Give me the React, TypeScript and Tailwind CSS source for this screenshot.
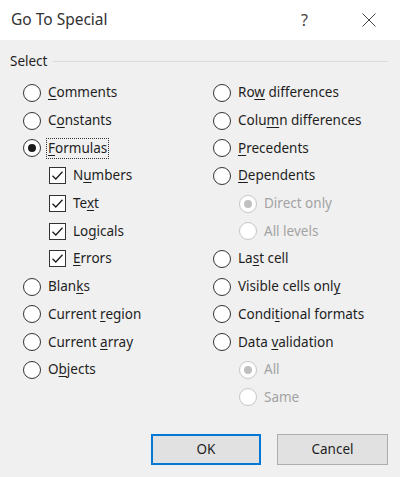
import React from "react";

type Item = {
  label: React.ReactNode;
  kind: "radio" | "check";
  checked?: boolean;
  disabled?: boolean;
  indent?: boolean;
  focus?: boolean;
};

// label with an access-key letter underlined
const k = (before: string, key: string, after: string) => (
  <>
    {before}
    <span className="underline decoration-1 underline-offset-[2px]">{key}</span>
    {after}
  </>
);

const leftItems: Item[] = [
  { label: k("", "C", "omments"), kind: "radio" },
  { label: k("C", "o", "nstants"), kind: "radio" },
  { label: k("", "F", "ormulas"), kind: "radio", checked: true, focus: true },
  { label: k("N", "u", "mbers"), kind: "check", checked: true, indent: true },
  { label: k("Te", "x", "t"), kind: "check", checked: true, indent: true },
  { label: k("Lo", "g", "icals"), kind: "check", checked: true, indent: true },
  { label: k("", "E", "rrors"), kind: "check", checked: true, indent: true },
  { label: k("Blan", "k", "s"), kind: "radio" },
  { label: k("Current ", "r", "egion"), kind: "radio" },
  { label: k("Current ", "a", "rray"), kind: "radio" },
  { label: k("O", "b", "jects"), kind: "radio" },
];

const rightItems: Item[] = [
  { label: k("Ro", "w", " differences"), kind: "radio" },
  { label: k("Colu", "m", "n differences"), kind: "radio" },
  { label: k("", "P", "recedents"), kind: "radio" },
  { label: k("", "D", "ependents"), kind: "radio" },
  { label: "Direct only", kind: "radio", checked: true, disabled: true, indent: true },
  { label: "All levels", kind: "radio", disabled: true, indent: true },
  { label: k("La", "s", "t cell"), kind: "radio" },
  { label: k("Visible cells onl", "y", ""), kind: "radio" },
  { label: k("Condi", "t", "ional formats"), kind: "radio" },
  { label: k("Data ", "v", "alidation"), kind: "radio" },
  { label: "All", kind: "radio", checked: true, disabled: true, indent: true },
  { label: "Same", kind: "radio", disabled: true, indent: true },
];

function Radio({ checked, disabled }: { checked?: boolean; disabled?: boolean }) {
  return (
    <span
      className={`flex h-[18px] w-[18px] shrink-0 items-center justify-center rounded-full border bg-white ${
        disabled ? "border-[#c6c6c6]" : "border-[#333333]"
      }`}
    >
      {checked && (
        <span
          className={`h-[8px] w-[8px] rounded-full ${disabled ? "bg-[#c0c0c0]" : "bg-[#1a1a1a]"}`}
        />
      )}
    </span>
  );
}

function Check({ checked }: { checked?: boolean }) {
  return (
    <span className="flex h-[17px] w-[17px] shrink-0 items-center justify-center border border-[#333333] bg-white">
      {checked && (
        <svg width="13" height="13" viewBox="0 0 13 13" fill="none">
          <path d="M1.5 6.8 L4.8 10 L11.5 2.8" stroke="#1a1a1a" strokeWidth="1.3" />
        </svg>
      )}
    </span>
  );
}

function Row({ item }: { item: Item }) {
  return (
    <div className={`flex h-[27.7px] items-center ${item.indent ? "pl-[26px]" : ""}`}>
      {item.kind === "radio" ? (
        <Radio checked={item.checked} disabled={item.disabled} />
      ) : (
        <Check checked={item.checked} />
      )}
      <span
        className={`ml-[5px] px-[1px] leading-[19px] ${
          item.focus ? "border border-dotted border-[#333]" : "border border-transparent"
        } ${item.disabled ? "text-[#a3a3a3]" : "text-[#1e1e1e]"}`}
      >
        {item.label}
      </span>
    </div>
  );
}

export default function App() {
  return (
    <div
      className="flex h-[477px] w-[400px] flex-col bg-[#f0f0f0] text-[13.5px]"
      style={{ fontFamily: '"Noto Sans", "Open Sans", sans-serif' }}
    >
      {/* title bar */}
      <div className="flex h-[40px] items-center bg-white pl-[11px] pr-[24px] text-[#333]">
        <span className="flex-1 text-[15.5px]">Go To Special</span>
        <span className="mr-[54px] text-[16px] text-[#444]">?</span>
        <svg width="14" height="14" viewBox="0 0 14 14">
          <path d="M0.5 0.5 L13.5 13.5 M13.5 0.5 L0.5 13.5" stroke="#444" strokeWidth="1" />
        </svg>
      </div>

      {/* group */}
      <div className="flex flex-col pt-[12px]">
        <div className="flex h-[18px] items-center pl-[10px] pr-[12px]">
          <span className="text-[#1e1e1e]">Select</span>
          <span className="ml-[6px] h-px flex-1 bg-[#dadada]" />
        </div>
        <div className="mt-[9px] flex pl-[23px]">
          <div className="flex w-[190px] flex-col">
            {leftItems.map((it, i) => (
              <Row key={i} item={it} />
            ))}
          </div>
          <div className="flex flex-col">
            {rightItems.map((it, i) => (
              <Row key={i} item={it} />
            ))}
          </div>
        </div>
      </div>

      {/* buttons */}
      <div className="mt-[22.6px] flex justify-end gap-[16px] pr-[12px]">
        <button className="h-[31px] w-[110px] border-2 border-[#0078d7] bg-[#e1e1e1] text-[#1e1e1e]">
          OK
        </button>
        <button className="h-[31px] w-[111px] border border-[#adadad] bg-[#e1e1e1] text-[#1e1e1e]">
          Cancel
        </button>
      </div>
    </div>
  );
}
